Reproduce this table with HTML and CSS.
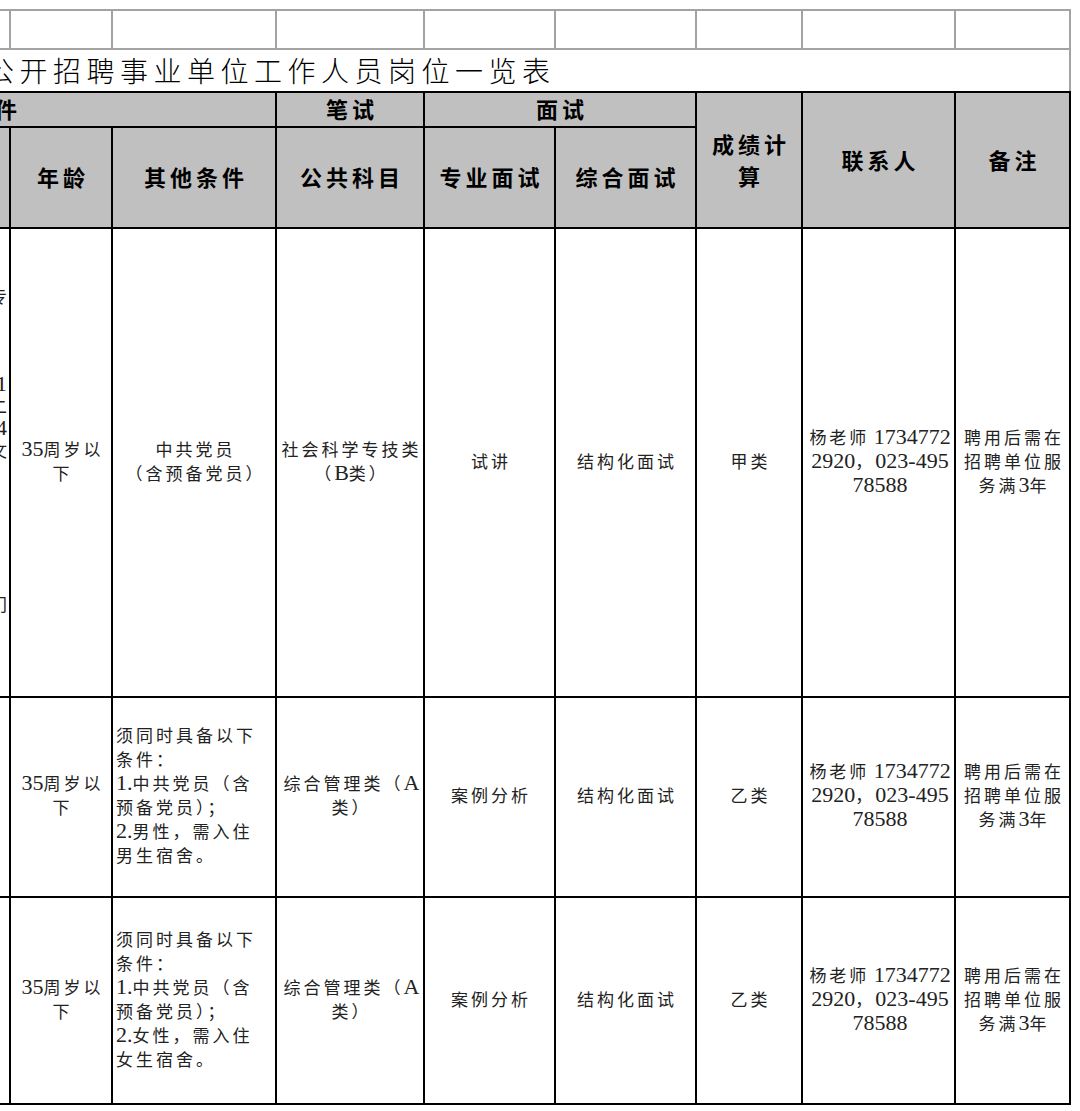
FILE: index.html
```html
<!DOCTYPE html>
<html lang="zh">
<head>
<meta charset="utf-8">
<title>岗位一览表</title>
<link rel="stylesheet" href="styles.css">
</head>
<body>
<div class="sheet">
  <div class="cols top">
    <div class="c"></div><div class="c"></div><div class="c"></div><div class="c"></div><div class="c"></div><div class="c"></div><div class="c"></div><div class="c"></div><div class="c"></div>
  </div>
  <div class="title"><span class="title-text">公开招聘事业单位工作人员岗位一览表</span></div>
  <div class="cols main">
    <div class="h cond span3"><span class="cut">件</span></div>
    <div class="h">笔试</div>
    <div class="h span2">面试</div>
    <div class="h rows2">成绩计<br>算</div>
    <div class="h rows2">联系人</div>
    <div class="h rows2">备注</div>

    <div class="h"></div>
    <div class="h">年龄</div>
    <div class="h">其他条件</div>
    <div class="h">公共科目</div>
    <div class="h">专业面试</div>
    <div class="h">综合面试</div>

    <div class="d clip"><div class="clip-in">专<br><br><br><br><span class="n">1</span><br>二<br><span class="n">4</span><br>文<br><br><br><br><br><br><br>门</div></div>
    <div class="d"><div><span class="n">35</span>周岁以<br>下</div></div>
    <div class="d"><div>中共党员<br>（含预备党员）</div></div>
    <div class="d"><div>社会科学专技类<br>（<span class="n">B</span>类）</div></div>
    <div class="d"><div>试讲</div></div>
    <div class="d"><div>结构化面试</div></div>
    <div class="d"><div>甲类</div></div>
    <div class="d"><div>杨老师<span class="sp"> </span><span class="n">1734772</span><br><span class="n">2920</span>，<span class="n">023-495</span><br><span class="n">78588</span></div></div>
    <div class="d"><div>聘用后需在<br>招聘单位服<br>务满<span class="n">3</span>年</div></div>

    <div class="d"></div>
    <div class="d"><div><span class="n">35</span>周岁以<br>下</div></div>
    <div class="d left"><div>须同时具备以下<br>条件：<br><span class="n">1.</span>中共党员（含<br>预备党员）；<br><span class="n">2.</span>男性，需入住<br>男生宿舍。</div></div>
    <div class="d"><div>综合管理类（<span class="n">A</span><br>类）</div></div>
    <div class="d"><div>案例分析</div></div>
    <div class="d"><div>结构化面试</div></div>
    <div class="d"><div>乙类</div></div>
    <div class="d"><div>杨老师<span class="sp"> </span><span class="n">1734772</span><br><span class="n">2920</span>，<span class="n">023-495</span><br><span class="n">78588</span></div></div>
    <div class="d"><div>聘用后需在<br>招聘单位服<br>务满<span class="n">3</span>年</div></div>

    <div class="d"></div>
    <div class="d"><div><span class="n">35</span>周岁以<br>下</div></div>
    <div class="d left"><div>须同时具备以下<br>条件：<br><span class="n">1.</span>中共党员（含<br>预备党员）；<br><span class="n">2.</span>女性，需入住<br>女生宿舍。</div></div>
    <div class="d"><div>综合管理类（<span class="n">A</span><br>类）</div></div>
    <div class="d"><div>案例分析</div></div>
    <div class="d"><div>结构化面试</div></div>
    <div class="d"><div>乙类</div></div>
    <div class="d"><div>杨老师<span class="sp"> </span><span class="n">1734772</span><br><span class="n">2920</span>，<span class="n">023-495</span><br><span class="n">78588</span></div></div>
    <div class="d"><div>聘用后需在<br>招聘单位服<br>务满<span class="n">3</span>年</div></div>
  </div>
</div>
</body>
</html>
```

FILE: styles.css
```css
html, body {
  margin: 0;
  padding: 0;
  background: #fff;
}

body {
  font-family: "Liberation Serif", "Noto Sans CJK SC", serif;
  color: #111;
  overflow: hidden;
}

.sheet {
  width: 1071px;
  margin-top: 9px;
}

.cols {
  display: grid;
  grid-template-columns: 9px 100px 162px 146px 129px 139px 104px 151px 113px;
  column-gap: 2px;
}

/* light spreadsheet gridline row */
.top {
  background: #a3a3a3;
  padding: 2px 2px 0 0;
}

.top .c {
  height: 37px;
  background: #fff;
}

/* title row */
.title {
  width: 1069px;
  height: 41px;
  border-top: 2px solid #a3a3a3;
  border-right: 2px solid #a3a3a3;
  overflow: hidden;
}

.title-text {
  display: block;
  margin-left: -14px;
  font-family: "Noto Sans CJK SC", sans-serif;
  font-weight: 300;
  font-size: 28px;
  letter-spacing: 5.5px;
  line-height: 40px;
  white-space: nowrap;
  color: #000;
}

/* main bordered table */
.main {
  background: #000;
  row-gap: 2px;
  padding: 2px 2px 2px 0;
  grid-template-rows: 33px 99px 467px 198px 205px;
}

.span3 { grid-column: span 3; }
.span2 { grid-column: span 2; }
.rows2 { grid-row: span 2; }

.h {
  background: #c0c0c0;
  display: flex;
  align-items: center;
  justify-content: center;
  text-align: center;
  padding-left: 4px;
  padding-bottom: 3px;
  font-family: "Noto Sans CJK SC", sans-serif;
  font-weight: 700;
  font-size: 22px;
  letter-spacing: 4px;
  line-height: 32px;
  color: #000;
  overflow: hidden;
  white-space: nowrap;
}

.h.cond {
  justify-content: flex-start;
  padding-left: 0;
}

.cut {
  margin-left: -5px;
}

.d {
  background: #fff;
  display: flex;
  align-items: center;
  justify-content: center;
  text-align: center;
  padding-left: 3px;
  font-size: 17px;
  font-weight: 400;
  letter-spacing: 3px;
  line-height: 24px;
  white-space: nowrap;
  overflow: hidden;
  color: #222;
}

.d .n {
  font-size: 22px;
  letter-spacing: 0;
  line-height: 0;
}

.d .sp {
  letter-spacing: 0;
}

.d.left {
  justify-content: flex-start;
  text-align: left;
  padding-left: 3px;
}

.d.clip {
  display: block;
  padding-left: 0;
}

.clip-in {
  width: 200px;
  margin-left: -193px;
  padding-top: 58px;
  text-align: right;
  letter-spacing: 0;
  line-height: 22px;
}
```
